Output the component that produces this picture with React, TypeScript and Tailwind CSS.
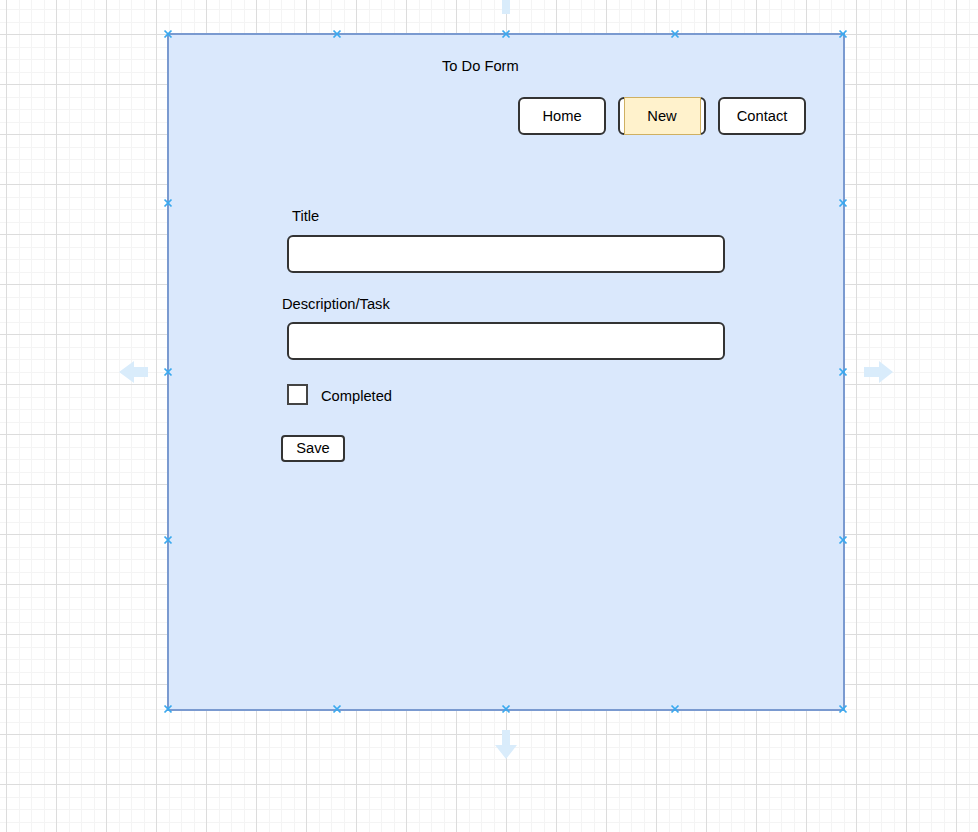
import React from 'react';

const W = 978;
const H = 832;

// canvas grid: minor lines every 12.5px, major every 50px
const gridLines = (offset: number, max: number) => {
  const out: { pos: number; major: boolean }[] = [];
  let k = Math.ceil(-offset / 12.5);
  for (; offset + k * 12.5 <= max; k++) {
    const p = offset + k * 12.5;
    out.push({ pos: Math.round(p) + 0.5, major: k % 4 === 0 });
  }
  return out;
};

const CanvasGrid: React.FC = () => {
  const xs = gridLines(6, W);
  const ys = gridLines(34, H);
  return (
    <svg className="absolute inset-0" width={W} height={H} shapeRendering="crispEdges">
      <rect width={W} height={H} fill="#ffffff" />
      {xs.filter((l) => !l.major).map((l) => (
        <line key={'vx' + l.pos} x1={l.pos} x2={l.pos} y1={0} y2={H} stroke="#f4f4f4" />
      ))}
      {ys.filter((l) => !l.major).map((l) => (
        <line key={'vy' + l.pos} y1={l.pos} y2={l.pos} x1={0} x2={W} stroke="#f4f4f4" />
      ))}
      {xs.filter((l) => l.major).map((l) => (
        <line key={'mx' + l.pos} x1={l.pos} x2={l.pos} y1={0} y2={H} stroke="#dcdcdc" />
      ))}
      {ys.filter((l) => l.major).map((l) => (
        <line key={'my' + l.pos} y1={l.pos} y2={l.pos} x1={0} x2={W} stroke="#dcdcdc" />
      ))}
    </svg>
  );
};

// hover arrows + selection handles drawn over the canvas
const handlePts: [number, number][] = [
  [168, 34], [337, 34], [506, 34], [675, 34], [843, 34],
  [168, 709], [337, 709], [506, 709], [675, 709], [843, 709],
  [168, 203], [168, 372], [168, 540],
  [843, 203], [843, 372], [843, 540],
];

const Overlay: React.FC = () => (
  <svg className="absolute inset-0 pointer-events-none" width={W} height={H}>
    <g fill="#d9ecfb">
      <rect x={502} y={0} width={8} height={14} />
      <path d="M148 367 L134 367 L134 361 L119 372 L134 383 L134 377 L148 377 Z" />
      <path d="M864 367 L879 367 L879 361 L893 372 L879 383 L879 377 L864 377 Z" />
      <path d="M502 730 L510 730 L510 745 L517 745 L506 759 L495 745 L502 745 Z" />
    </g>
    <g stroke="#3aa9ef" strokeWidth={1.7}>
      {handlePts.map(([x, y]) => (
        <g key={x + '-' + y}>
          <line x1={x - 3.5} y1={y - 3.5} x2={x + 3.5} y2={y + 3.5} />
          <line x1={x - 3.5} y1={y + 3.5} x2={x + 3.5} y2={y - 3.5} />
        </g>
      ))}
    </g>
  </svg>
);

const NavButton: React.FC<{ label: string; active?: boolean }> = ({ label, active }) => (
  <div className="relative w-[88px] h-[38px] rounded-[6px] border-2 border-[#333] bg-white flex items-center justify-center">
    {active && (
      <div className="absolute left-[4px] right-[3px] top-[-2px] bottom-[-2px] bg-[#fff2cc] border border-[#cfb062]" />
    )}
    <span className="relative">{label}</span>
  </div>
);

const TextBox: React.FC = () => (
  <div className="w-[438px] h-[38px] rounded-[6px] border-2 border-[#333] bg-white" />
);

export default function App() {
  return (
    <div
      className="relative w-[978px] h-[832px] overflow-hidden text-black text-[14.7px]"
      style={{ fontFamily: '"Liberation Sans", Arial, sans-serif' }}
    >
      <CanvasGrid />

      {/* the form frame on the canvas */}
      <div className="absolute left-[167px] top-[33px] w-[678px] h-[678px] bg-[#dae8fc] border-2 border-[#7a9ad0]">
        <div className="flex flex-col items-start">
          <div className="ml-[273px] mt-[21px] h-[20px] leading-[20px]">To Do Form</div>

          <div className="ml-[349px] mt-[21px] flex gap-[12px]">
            <NavButton label="Home" />
            <NavButton label="New" active />
            <NavButton label="Contact" />
          </div>

          <div className="ml-[123px] mt-[71px] h-[20px] leading-[20px]">Title</div>
          <div className="ml-[118px] mt-[9px]">
            <TextBox />
          </div>

          <div className="ml-[113px] mt-[21px] h-[20px] leading-[20px]">Description/Task</div>
          <div className="ml-[118px] mt-[8px]">
            <TextBox />
          </div>

          <div className="ml-[118px] mt-[24px] h-[21px] flex items-center gap-[13px]">
            <div className="w-[21px] h-[21px] border-2 border-[#444] bg-white" />
            <span className="leading-[20px] mt-[2px]">Completed</span>
          </div>

          <div className="ml-[112px] mt-[30px] w-[64px] h-[27px] rounded-[4px] border-2 border-[#333] bg-white flex items-center justify-center">
            Save
          </div>
        </div>
      </div>

      <Overlay />
    </div>
  );
}
